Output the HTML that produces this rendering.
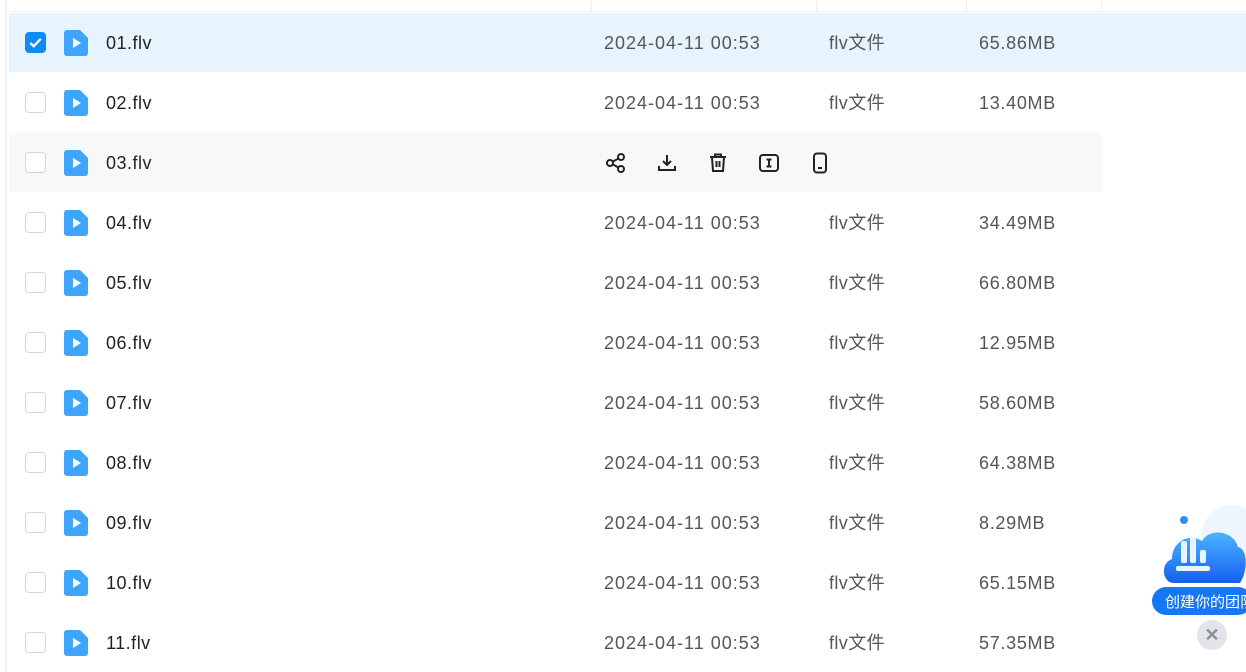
<!DOCTYPE html>
<html><head><meta charset="utf-8"><style>
body{margin:0;width:1246px;height:672px;overflow:hidden;background:#fff;font-family:"Liberation Sans","Noto Sans CJK SC",sans-serif;position:relative}
.lb{position:absolute;left:5px;top:0;width:2px;height:672px;background:#f0f0f2}
.hd{position:absolute;left:7px;top:11px;width:1239px;height:1px;background:#f0f0f2}
.vd{position:absolute;top:0;width:1px;height:11px;background:#eceef2}
.row{position:absolute;left:9px;height:59px;width:1237px}
.cb{position:absolute;left:16px;top:19px;width:19px;height:19px;border:1.5px solid #d6d7db;border-radius:4px;background:#fff}
.cb.on{background:#0d8cf5;border-color:#0d8cf5}
.ic{position:absolute;left:55px;top:17px}
.t{position:absolute;top:19px;font-size:18px;line-height:22px;color:#555}
.n{left:97px;color:#222;letter-spacing:0.5px}
.d{left:595px;letter-spacing:1px}.k{left:820px;letter-spacing:0.4px}.s{left:970px;letter-spacing:0.7px}
.ops{position:absolute;top:19px;left:596px}
.ops svg{position:absolute;top:0}
</style></head><body>
<div class="lb"></div><div class="hd"></div>
<div class="vd" style="left:591px"></div><div class="vd" style="left:816px"></div><div class="vd" style="left:966px"></div><div class="vd" style="left:1101px"></div>
<div id="rows"></div>
<script>
var d=[["01","65.86MB"],["02","13.40MB"],["03",""],["04","34.49MB"],["05","66.80MB"],["06","12.95MB"],["07","58.60MB"],["08","64.38MB"],["09","8.29MB"],["10","65.15MB"],["11","57.35MB"]];
var h="";
d.forEach(function(r,i){
var top=13+60*i;var bg=i==0?"background:#e8f4fd;":(i==2?"background:#f7f8fa;width:1093px;":"");
h+='<div class="row" style="top:'+top+'px;'+bg+'">';
h+='<div class="cb'+(i==0?' on':'')+'">'+(i==0?'<svg width="19" height="19" viewBox="0 0 18 18" style="position:absolute;left:0;top:0"><path d="M4 9.5l3.3 3L14 5.5" stroke="#fff" stroke-width="2.2" fill="none"/></svg>':'')+'</div>';
h+='<svg class="ic" width="24" height="26" viewBox="0 0 24 26"><path d="M3 0h13l8 8v15a3 3 0 0 1-3 3H3a3 3 0 0 1-3-3V3a3 3 0 0 1 3-3z" fill="#3ea5fb"/><path d="M9 8l8 5-8 5z" fill="#fff"/></svg>';
h+='<div class="t n">'+r[0]+'.flv</div>';
if(i==2){h+='<div class="ops">'+
'<svg style="left:0" width="22" height="22" viewBox="0 0 22 22" fill="none" stroke="#222" stroke-width="2"><circle cx="5" cy="11" r="3"/><circle cx="16" cy="5" r="3"/><circle cx="16" cy="17" r="3"/><path d="M8 9.5l5.5-3M8 12.5l5.5 3"/></svg>'+
'<svg style="left:51px" width="22" height="22" viewBox="0 0 22 22" fill="none" stroke="#222" stroke-width="2"><path d="M11 3v10M7 9l4 4 4-4M3 14v4h16v-4"/></svg>'+
'<svg style="left:102px" width="22" height="22" viewBox="0 0 22 22" fill="none" stroke="#222" stroke-width="2"><path d="M3 5h16M8 5V2.5h6V5M5 5l1 14h10l1-14M9.5 9v6M12.5 9v6"/></svg>'+
'<svg style="left:153px" width="22" height="22" viewBox="0 0 22 22" fill="none" stroke="#222" stroke-width="2"><rect x="2" y="3" width="18" height="16" rx="3"/><path d="M8.5 7.5h5M11 7.5v7M8.5 14.5h5"/></svg>'+
'<svg style="left:204px" width="22" height="22" viewBox="0 0 22 22" fill="none" stroke="#222" stroke-width="2"><rect x="5" y="1.5" width="12" height="19" rx="3"/><path d="M9 16h4"/></svg>'+
'</div>';}
else{h+='<div class="t d">2024-04-11 00:53</div><div class="t k">flv文件</div><div class="t s">'+r[1]+'</div>';}
h+='</div>';});
document.getElementById('rows').innerHTML=h;
</script>
<svg style="position:absolute;left:1152px;top:505px" width="94" height="110" viewBox="0 0 94 110">
<defs><linearGradient id="g" x1="0" y1="0" x2="0" y2="1"><stop offset="0" stop-color="#4cb4ff"/><stop offset="1" stop-color="#1560f0"/></linearGradient></defs>
<circle cx="80" cy="30" r="30" fill="#eef5ff"/>
<circle cx="32" cy="15" r="4" fill="#2c8ef8"/>
<path d="M22 78c-12 0-14-20-2-24 0-18 18-26 30-18 8-14 32-10 36 6 10 2 10 24 2 36z" fill="url(#g)"/>
<rect x="29" y="36" width="6" height="22" rx="2" fill="#e8f4ff"/><rect x="38" y="32" width="6" height="26" rx="2" fill="#e8f4ff"/><rect x="48" y="45" width="6" height="13" rx="2" fill="#e8f4ff"/>
<rect x="24" y="61" width="34" height="5" rx="2" fill="#e8f4ff"/>
<rect x="0" y="82" width="100" height="28" rx="14" fill="#1677f5"/>
<text x="13" y="102" font-size="15" fill="#fff" font-family="Noto Sans CJK SC,sans-serif">创建你的团队</text>
</svg>
<div style="position:absolute;left:1197px;top:620px;width:30px;height:30px;border-radius:50%;background:#e2e4ea;color:#8a8f9a;font-size:18px;line-height:30px;text-align:center;font-weight:bold">✕</div>
</body></html>
